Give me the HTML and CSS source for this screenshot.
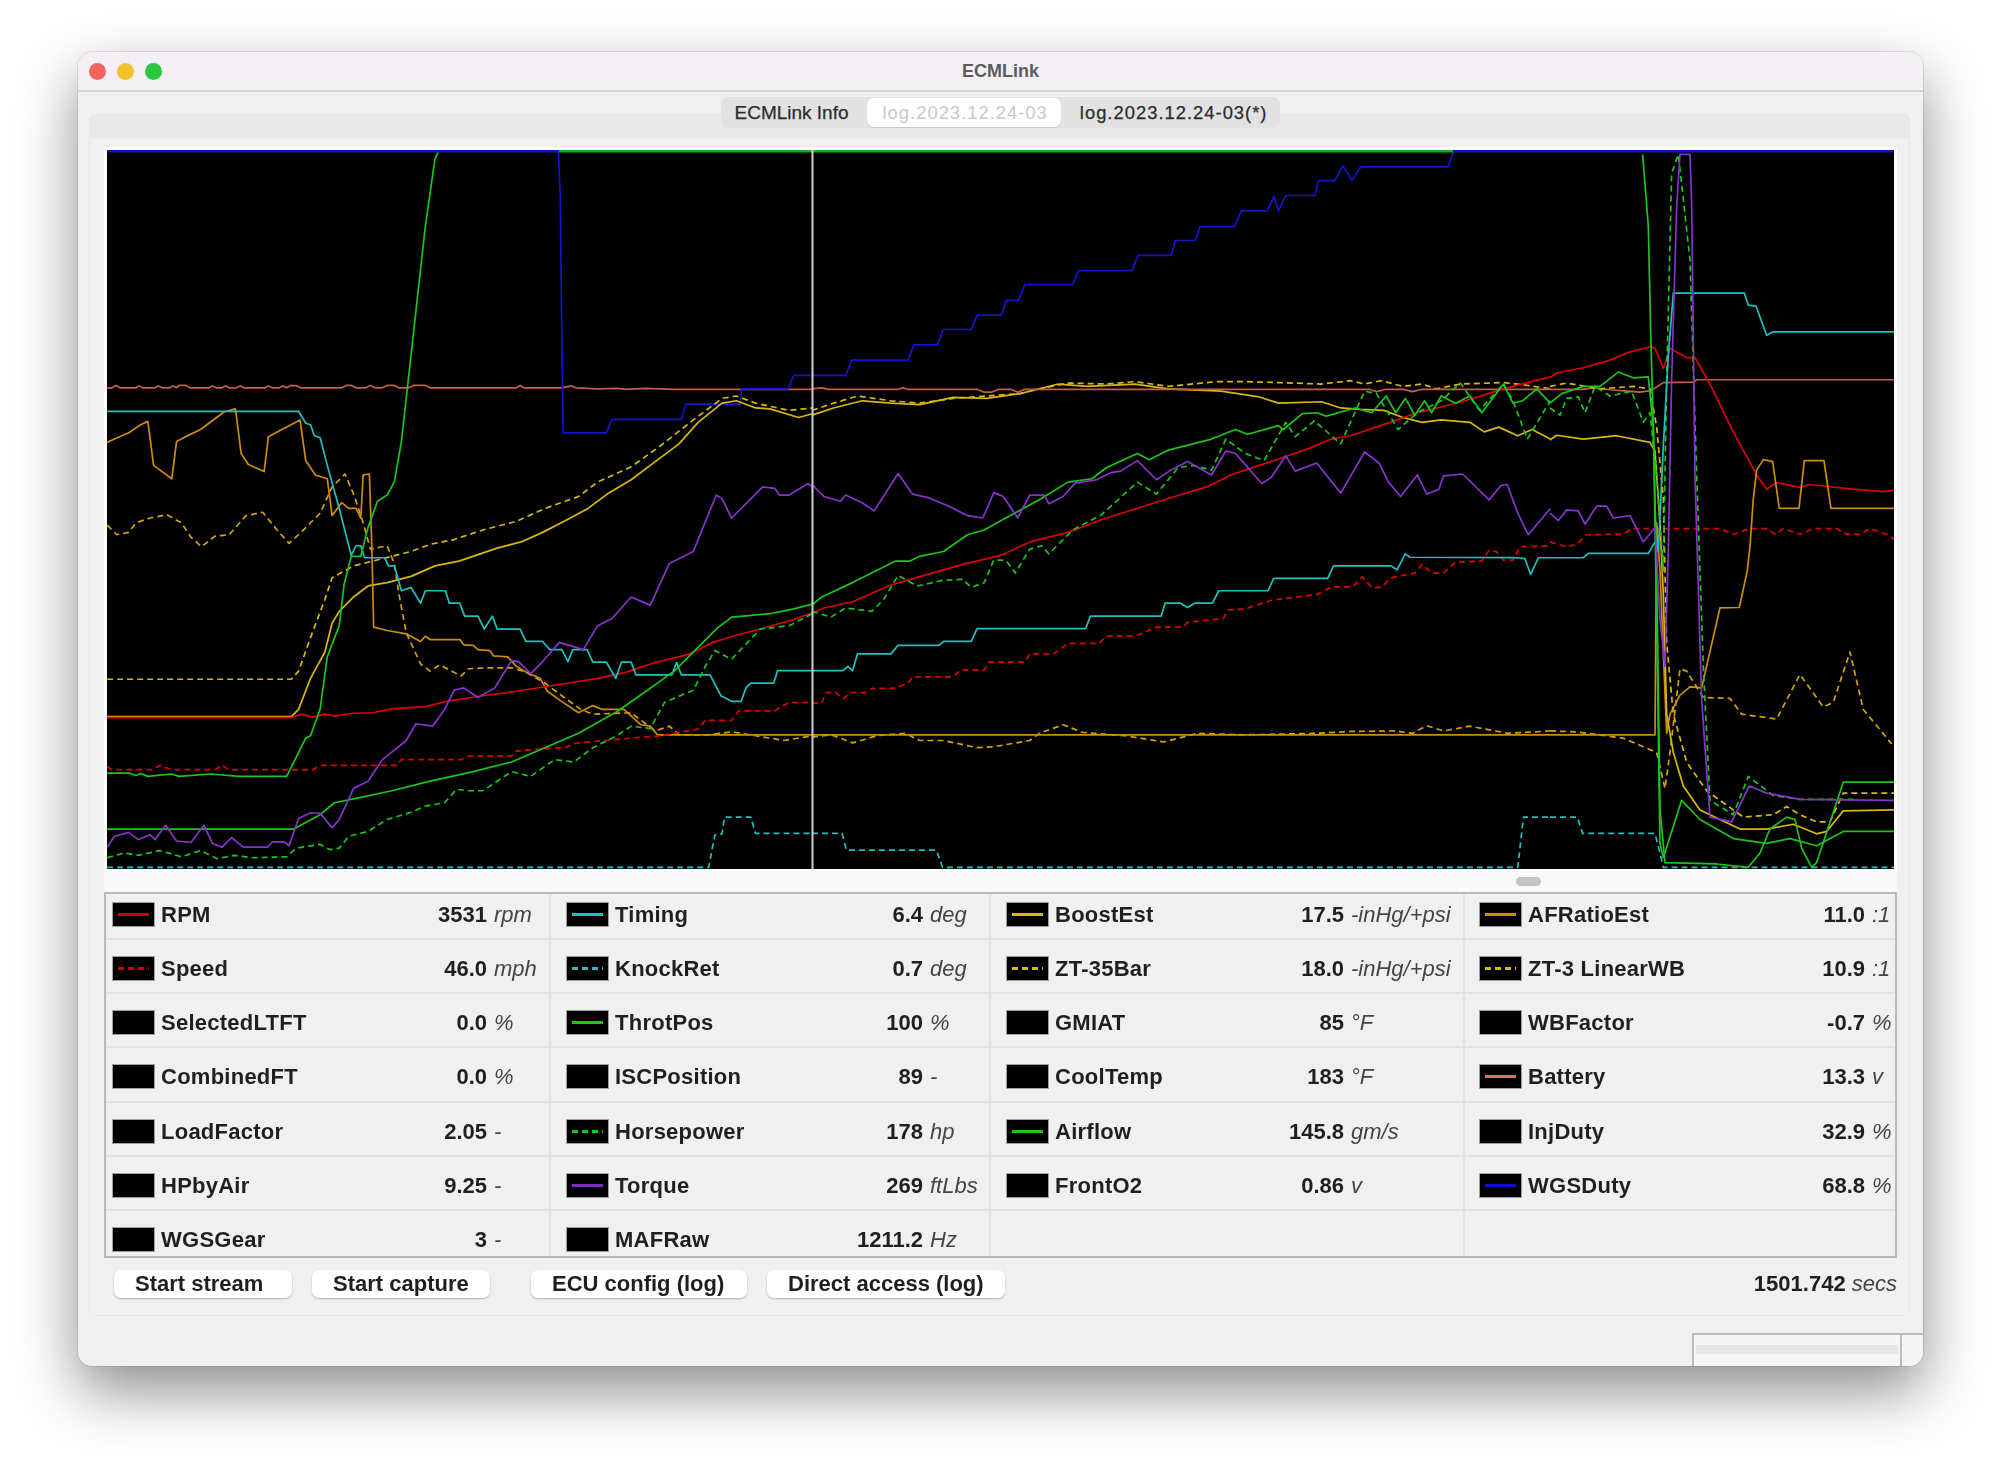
FILE: index.html
```html
<!DOCTYPE html>
<html lang="en">
  <head>
    <meta charset="UTF-8" />
    <title>ECMLink</title>
    <link rel="stylesheet" href="styles.css">
  </head>
  <body>
    <div class="window">
      <div class="titlebar">
        <div class="lights">
          <span class="light is-red"></span>
          <span class="light is-yellow"></span>
          <span class="light is-green"></span>
        </div>
        <div class="title">ECMLink</div>
      </div>

      <div class="tabs">
        <span class="tab is-info">ECMLink Info</span>
        <span class="tab is-active">log.2023.12.24-03</span>
        <span class="tab is-log">log.2023.12.24-03(*)</span>
      </div>

      <div class="pane">
        <div class="pane-body">
          <div class="chart-frame">
            <svg class="chart" viewBox="107 150 1787 719" preserveAspectRatio="none">
              <rect x="107" y="150" width="1787" height="719" fill="#000"/>

              <!-- left part, up to the cursor -->
              <g transform="translate(100 140) scale(.4785)">
                <polyline class="battery" points="15,518 25,518 33,513 42,518 75,518 82,514 90,518 115,518 122,514 130,518 145,518 152,514 160,518 165,513 180,513 188,518 228,518 235,514 243,518 255,518 262,514 270,518 285,518 293,514 300,518 345,518 352,514 360,518 375,518 382,514 390,518 398,513 412,514 420,518 505,518 515,513 525,513 535,518 555,518 565,513 575,518 590,518 600,513 615,513 625,518 645,518 655,513 680,513 690,518 870,518 878,513 886,518 965,518 985,514 995,518 1040,520 1080,519 1100,521 1140,519 1200,521 1489,521"/>
                <polyline class="wgs" points="958,25 962,120 964,320 968,612 1058,612 1070,584 1215,584 1224,552 1338,552 1341,520 1438,520 1450,492 1489,492"/>
                <polyline class="knock dashed" points="15,1520 1272,1520 1285,1452 1300,1450 1305,1415 1360,1415 1370,1449 1489,1449"/>
                <polyline class="zt35 dashed" points="15,1127 400,1127 415,1110 440,1040 470,960 485,915 530,890 590,875 650,860 690,845 740,835 800,815 870,797 930,770 1000,745 1040,715 1110,683 1170,640 1240,585 1300,540 1330,535 1370,550 1440,565 1489,560"/>
                <polyline class="boost" points="15,1205 400,1205 415,1190 440,1125 470,1070 485,1010 500,985 530,955 560,932 600,925 650,912 700,890 750,880 830,853 880,840 925,820 970,797 1020,770 1060,740 1110,710 1150,680 1210,635 1250,590 1300,550 1330,545 1370,560 1400,562 1460,580 1489,572"/>
                <polyline class="zt3 dashed" points="15,805 35,825 60,820 75,800 105,790 140,783 170,800 190,830 212,850 240,828 270,825 305,785 340,778 370,815 395,843 420,820 460,780 485,725 512,698 530,740 550,800 565,855 600,848 615,885 625,950 640,1030 670,1095 690,1110 710,1097 755,1120 770,1105 810,1103 860,1103 890,1112 930,1135 970,1165 1005,1190 1030,1200 1110,1197 1160,1235 1190,1225 1210,1243 1270,1243 1320,1237 1370,1245 1430,1255 1489,1245"/>
                <polyline class="afr" points="15,632 30,625 60,612 85,595 100,588 112,680 150,708 160,630 175,622 210,605 260,568 283,562 295,655 310,678 343,693 352,620 380,605 418,585 430,670 450,700 475,708 485,785 505,758 520,770 535,770 545,790 550,700 563,698 568,850 572,1018 600,1025 640,1032 670,1048 680,1037 690,1044 752,1044 760,1055 780,1056 790,1065 815,1067 822,1078 852,1080 870,1100 890,1112 920,1125 935,1152 960,1170 1000,1197 1030,1182 1050,1190 1095,1190 1130,1222 1150,1225 1165,1243 1489,1243"/>
                <polyline class="speed dashed" points="15,1310 25,1316 110,1316 125,1307 150,1316 240,1316 255,1307 270,1316 445,1316 460,1307 620,1307 630,1295 755,1295 770,1287 860,1287 870,1277 975,1269 990,1261 1130,1248 1165,1246 1250,1231 1265,1213 1320,1213 1335,1193 1410,1193 1425,1183 1440,1176 1489,1176"/>
                <polyline class="rpm" points="15,1207 400,1207 420,1200 445,1206 470,1200 490,1204 530,1198 570,1197 610,1189 680,1184 730,1172 790,1163 870,1152 960,1138 1040,1125 1100,1112 1160,1092 1230,1075 1280,1050 1330,1035 1380,1022 1450,1002 1489,988"/>
                <polyline class="timing" points="15,567 415,567 430,592 440,595 448,618 460,622 475,680 500,770 525,868 535,848 545,848 553,873 595,873 603,890 615,890 630,942 650,935 670,968 680,942 722,942 730,968 752,968 762,995 790,995 803,1022 820,995 830,1022 878,1022 890,1048 925,1048 940,1065 965,1065 978,1090 988,1065 1018,1065 1030,1091 1058,1091 1078,1125 1090,1091 1110,1091 1120,1118 1195,1118 1205,1092 1215,1118 1275,1118 1298,1162 1320,1173 1340,1173 1350,1145 1360,1135 1408,1135 1416,1109 1489,1109"/>
                <polyline class="airflow" points="15,1323 60,1323 75,1328 85,1324 100,1330 150,1325 165,1330 230,1325 290,1330 390,1330 410,1290 430,1250 440,1245 460,1190 475,1080 500,1015 510,930 525,870 545,870 560,810 580,755 600,742 615,715 630,630 650,450 680,180 700,40 707,25"/>
                <polyline class="throt" points="15,1440 405,1440 460,1410 490,1385 540,1375 610,1360 690,1340 780,1320 860,1300 1000,1240 1080,1195 1130,1160 1200,1110 1245,1065 1290,1020 1320,997 1400,990 1450,980 1489,970"/>
                <polyline class="hp dashed" points="15,1500 50,1490 80,1495 125,1485 170,1498 210,1485 245,1502 280,1495 320,1500 390,1498 410,1480 460,1472 480,1483 500,1480 520,1455 560,1445 600,1420 650,1405 680,1392 720,1385 745,1357 770,1360 800,1360 860,1320 900,1330 950,1295 990,1300 1030,1270 1080,1245 1110,1225 1150,1230 1180,1175 1240,1150 1265,1100 1285,1067 1320,1085 1380,1022 1440,1015 1489,990"/>
                <polyline class="torque" points="15,1478 30,1455 60,1447 80,1462 105,1452 115,1462 137,1432 160,1465 190,1468 217,1432 235,1470 255,1478 275,1458 300,1478 350,1478 360,1467 385,1467 395,1475 415,1418 440,1406 460,1407 485,1437 500,1420 530,1355 560,1340 590,1295 640,1255 660,1220 695,1225 720,1190 740,1150 760,1145 790,1165 825,1145 860,1088 875,1090 900,1115 925,1090 960,1050 1010,1065 1040,1015 1070,1000 1110,955 1150,972 1190,885 1240,860 1260,810 1288,742 1300,750 1320,790 1360,750 1385,725 1410,728 1420,742 1440,742 1480,718 1489,725"/>
              </g>

              <!-- middle part -->
              <g transform="translate(800 140) scale(.4785)">
                <polyline class="wgs" points="25,492 96,492 108,460 226,460 238,428 288,428 299,396 358,396 370,366 420,366 432,335 456,335 470,302 570,302 582,273 694,273 706,241 776,241 784,210 826,210 836,181 908,181 922,148 976,148 991,118 1000,148 1015,116 1076,116 1084,85 1118,85 1134,54 1154,84 1172,56 1355,56 1365,25"/>
                <polyline class="zt35 dashed" points="25,565 70,550 120,535 190,545 250,550 320,540 390,535 460,530 500,520 560,508 640,510 700,505 770,515 870,505 930,505 1000,507 1090,510 1150,503 1180,510 1215,503 1260,515 1300,510 1330,520 1380,510 1470,507 1500,510 1568,520"/>
                <polyline class="boost" points="25,575 70,560 130,545 190,550 250,553 320,538 390,540 460,530 540,510 600,515 700,510 770,520 880,525 960,537 1000,550 1090,547 1130,560 1170,563 1220,565 1260,580 1300,590 1340,585 1400,590 1430,610 1460,600 1500,618 1530,605 1568,625"/>
                <polyline class="battery" points="25,520 45,518 60,521 205,521 215,518 225,521 370,521 385,527 400,527 415,521 440,521 455,527 470,521 1170,521 1190,521 1205,526 1225,521 1260,521 1280,526 1300,521 1568,521"/>
                <polyline class="knock dashed" points="25,1449 88,1449 97,1484 285,1484 298,1520 1500,1520 1512,1415 1568,1415"/>
                <polyline class="zt3 dashed" points="25,1248 65,1243 110,1260 160,1245 220,1240 250,1255 300,1255 370,1270 405,1268 480,1255 500,1240 550,1222 590,1238 680,1245 760,1258 830,1240 930,1243 1080,1240 1150,1236 1245,1235 1280,1240 1310,1224 1345,1235 1400,1225 1480,1240 1568,1235"/>
                <polyline class="afr" points="25,1243 1568,1243"/>
                <polyline class="speed dashed" points="25,1177 45,1177 55,1155 75,1155 90,1168 105,1155 135,1155 150,1146 195,1146 225,1136 235,1122 320,1122 335,1108 385,1108 395,1091 470,1091 480,1074 530,1074 560,1052 625,1052 640,1037 700,1037 745,1018 800,1018 810,1008 885,1000 895,982 930,980 985,962 1080,950 1110,934 1155,934 1175,913 1195,935 1215,935 1235,915 1285,905 1300,887 1320,905 1345,905 1370,882 1425,880 1440,858 1455,860 1470,878 1490,878 1505,850 1568,848"/>
                <polyline class="timing" points="25,1109 90,1109 100,1100 110,1109 120,1074 190,1074 205,1056 290,1056 300,1048 358,1048 370,1021 597,1021 607,995 755,995 763,968 795,968 810,977 825,968 862,968 875,942 978,942 990,916 1103,916 1115,890 1235,890 1248,898 1265,865 1275,872 1500,873 1515,875 1527,908 1543,873 1568,873"/>
                <polyline class="rpm" points="25,990 50,978 110,965 190,930 260,910 340,887 420,868 480,840 560,820 640,790 720,765 790,743 850,725 900,700 960,680 1020,660 1060,646 1110,625 1150,618 1210,598 1290,570 1380,548 1470,520 1568,495"/>
                <polyline class="throt" points="25,972 45,955 110,925 200,880 230,880 250,870 300,860 350,825 385,815 430,790 500,752 560,715 610,708 640,685 705,655 730,668 770,648 860,625 910,605 935,615 1000,597 1010,605 1050,572 1080,570 1100,577 1160,560 1195,570 1225,535 1245,570 1265,540 1285,575 1305,545 1320,570 1340,535 1370,550 1400,535 1425,570 1470,510 1490,550 1510,545 1540,520 1568,550"/>
                <polyline class="hp dashed" points="25,985 65,997 95,978 150,985 175,960 205,910 245,932 300,920 340,918 358,935 385,925 405,878 430,878 450,905 480,855 505,848 520,865 570,815 630,783 650,765 705,715 745,740 790,685 820,680 860,690 890,625 930,655 970,670 1015,590 1035,620 1075,587 1130,635 1180,525 1205,530 1250,605 1290,570 1340,545 1380,508 1420,565 1470,510 1490,545 1520,625 1568,545"/>
                <polyline class="torque" points="25,720 50,745 85,755 95,742 130,758 155,775 205,697 235,740 270,748 310,765 350,785 382,790 405,737 425,745 455,790 480,742 510,742 520,760 550,745 575,717 620,710 650,695 670,692 705,670 745,710 770,693 810,672 860,700 890,650 910,655 965,718 985,705 1015,660 1035,692 1080,675 1130,738 1180,652 1210,675 1230,715 1255,745 1290,700 1310,740 1335,730 1345,702 1385,698 1440,752 1465,722 1478,720 1500,780 1522,825 1568,770"/>
              </g>

              <!-- right part, the shutdown spike -->
              <g transform="translate(1500 140) scale(.3333 .4785)">
                <polyline class="battery" points="150,521 250,521 280,518 330,522 380,525 420,527 450,524 470,516 490,507 580,506 590,501 1183,501"/>
                <polyline class="knock dashed" points="150,1415 232,1415 248,1449 465,1449 480,1490 490,1520 1183,1520"/>
                <polyline class="speed dashed" points="150,840 200,850 230,845 260,825 370,824 395,812 660,812 700,824 750,812 800,812 825,824 850,812 900,824 940,812 1010,812 1040,824 1080,824 1110,812 1160,824 1183,835"/>
                <polyline class="rpm" points="150,497 170,487 250,476 330,460 380,445 450,432 465,435 490,478 510,435 560,455 585,455 630,510 700,610 770,700 800,730 830,716 900,726 930,720 1050,729 1150,735 1183,732"/>
                <polyline class="zt3 dashed" points="150,1235 230,1237 370,1250 470,1280 495,1355 510,1280 540,1105 560,1110 610,1165 690,1167 725,1200 830,1210 900,1117 970,1185 1000,1175 1050,1070 1090,1190 1175,1262"/>
                <polyline class="afr" points="150,1243 465,1243 470,800 480,900 500,1240 510,1200 540,1160 570,1143 605,1145 660,978 718,977 742,900 750,850 760,750 770,690 790,668 818,672 838,770 897,770 913,670 972,670 993,770 1183,770"/>
                <polyline class="zt35 dashed" points="150,515 200,508 300,520 400,515 450,520 470,600 490,750 500,1050 520,1200 560,1300 620,1360 730,1415 820,1410 860,1393 900,1410 950,1425 990,1425 1030,1365 1183,1365"/>
                <polyline class="boost" points="150,627 170,617 250,625 350,618 450,632 465,650 480,800 490,950 500,1200 520,1280 550,1350 600,1400 720,1440 800,1440 880,1430 950,1450 980,1445 1030,1402 1183,1400"/>
                <polyline class="airflow" points="428,30 445,180 452,400 460,600 470,1000 480,1470 490,1500 545,1380 600,1420 700,1460 800,1470 870,1460 950,1475 1030,1445 1183,1445"/>
                <polyline class="throt" points="150,550 185,530 250,515 300,515 355,485 400,497 445,495 460,600 470,900 480,1400 495,1510 650,1513 745,1520 780,1490 810,1440 860,1415 885,1420 905,1480 935,1520 950,1510 1030,1342 1183,1342"/>
                <polyline class="hp dashed" points="150,560 180,575 200,540 235,537 255,570 285,515 330,535 395,525 430,590 450,570 470,700 490,900 500,500 515,70 535,30 570,250 590,700 610,1100 630,1380 700,1410 745,1330 820,1370 900,1378 1060,1378"/>
                <polyline class="timing" points="150,873 250,873 265,864 445,864 465,840 475,860 490,640 505,450 520,320 733,320 745,345 768,347 800,408 820,401 1183,401"/>
                <polyline class="torque" points="150,780 175,795 200,773 235,775 255,803 290,765 320,765 340,790 390,785 430,840 465,810 480,1000 495,1100 505,860 515,500 530,140 540,30 570,30 575,130 585,700 605,1170 630,1415 695,1425 748,1350 800,1365 900,1378 1183,1380"/>
              </g>

              <polyline class="top-line is-blue" points="107,151 559,151"/>
              <polyline class="top-line is-green" points="559,151 1453,151"/>
              <polyline class="top-line is-blue" points="1453,151 1894,151"/>
              <line class="cursor" x1="812.5" y1="150" x2="812.5" y2="869"/>
            </svg>
          </div>

          <div class="scroll-strip"><span class="scroll-thumb"></span></div>

          <div class="readings">
            <div class="cell col-a"><span class="swatch"><i class="trace red"></i></span><span class="reading"><span>RPM</span><span>3531</span></span><em>rpm</em></div>
            <div class="cell col-b"><span class="swatch"><i class="trace cyan"></i></span><span class="reading"><span>Timing</span><span>6.4</span></span><em>deg</em></div>
            <div class="cell col-c"><span class="swatch"><i class="trace yellow"></i></span><span class="reading"><span>BoostEst</span><span>17.5</span></span><em>-inHg/+psi</em></div>
            <div class="cell col-d"><span class="swatch"><i class="trace orange"></i></span><span class="reading"><span>AFRatioEst</span><span>11.0</span></span><em>:1</em></div>

            <div class="cell col-a"><span class="swatch"><i class="trace red is-dashed"></i></span><span class="reading"><span>Speed</span><span>46.0</span></span><em>mph</em></div>
            <div class="cell col-b"><span class="swatch"><i class="trace cyan is-dashed"></i></span><span class="reading"><span>KnockRet</span><span>0.7</span></span><em>deg</em></div>
            <div class="cell col-c"><span class="swatch"><i class="trace yellow is-dashed"></i></span><span class="reading"><span>ZT-35Bar</span><span>18.0</span></span><em>-inHg/+psi</em></div>
            <div class="cell col-d"><span class="swatch"><i class="trace yellow is-dashed"></i></span><span class="reading"><span>ZT-3 LinearWB</span><span>10.9</span></span><em>:1</em></div>

            <div class="cell col-a"><span class="swatch"></span><span class="reading"><span>SelectedLTFT</span><span>0.0</span></span><em>%</em></div>
            <div class="cell col-b"><span class="swatch"><i class="trace green"></i></span><span class="reading"><span>ThrotPos</span><span>100</span></span><em>%</em></div>
            <div class="cell col-c"><span class="swatch"></span><span class="reading"><span>GMIAT</span><span>85</span></span><em>°F</em></div>
            <div class="cell col-d"><span class="swatch"></span><span class="reading"><span>WBFactor</span><span>-0.7</span></span><em>%</em></div>

            <div class="cell col-a"><span class="swatch"></span><span class="reading"><span>CombinedFT</span><span>0.0</span></span><em>%</em></div>
            <div class="cell col-b"><span class="swatch"></span><span class="reading"><span>ISCPosition</span><span>89</span></span><em>-</em></div>
            <div class="cell col-c"><span class="swatch"></span><span class="reading"><span>CoolTemp</span><span>183</span></span><em>°F</em></div>
            <div class="cell col-d"><span class="swatch"><i class="trace salmon"></i></span><span class="reading"><span>Battery</span><span>13.3</span></span><em>v</em></div>

            <div class="cell col-a"><span class="swatch"></span><span class="reading"><span>LoadFactor</span><span>2.05</span></span><em>-</em></div>
            <div class="cell col-b"><span class="swatch"><i class="trace green is-dashed"></i></span><span class="reading"><span>Horsepower</span><span>178</span></span><em>hp</em></div>
            <div class="cell col-c"><span class="swatch"><i class="trace green"></i></span><span class="reading"><span>Airflow</span><span>145.8</span></span><em>gm/s</em></div>
            <div class="cell col-d"><span class="swatch"></span><span class="reading"><span>InjDuty</span><span>32.9</span></span><em>%</em></div>

            <div class="cell col-a"><span class="swatch"></span><span class="reading"><span>HPbyAir</span><span>9.25</span></span><em>-</em></div>
            <div class="cell col-b"><span class="swatch"><i class="trace purple"></i></span><span class="reading"><span>Torque</span><span>269</span></span><em>ftLbs</em></div>
            <div class="cell col-c"><span class="swatch"></span><span class="reading"><span>FrontO2</span><span>0.86</span></span><em>v</em></div>
            <div class="cell col-d"><span class="swatch"><i class="trace blue"></i></span><span class="reading"><span>WGSDuty</span><span>68.8</span></span><em>%</em></div>

            <div class="cell col-a"><span class="swatch"></span><span class="reading"><span>WGSGear</span><span>3</span></span><em>-</em></div>
            <div class="cell col-b"><span class="swatch"></span><span class="reading"><span>MAFRaw</span><span>1211.2</span></span><em>Hz</em></div>
            <div class="cell col-c"></div>
            <div class="cell col-d"></div>
          </div>

          <div class="footer">
            <button class="btn is-stream">Start stream</button>
            <button class="btn is-stream">Start capture</button>
            <button class="btn is-config">ECU config (log)</button>
            <button class="btn is-direct">Direct access (log)</button>
            <div class="elapsed"><b>1501.742</b> <em>secs</em></div>
          </div>
        </div>
      </div>

      <div class="status">
        <div class="status-box"><span class="status-band"></span></div>
        <div class="status-corner"></div>
      </div>
    </div>
  </body>
</html>
```

FILE: styles.css
```css
* {
  box-sizing: border-box;
  margin: 0;
  padding: 0;
}
body {
  background: #fff;
  font-family: "Liberation Sans", Arial, sans-serif;
  color: #1f1f1f;
  padding: 52px 0 0 78px;
  height: 1469px;
  overflow: hidden;
}
.window {
  width: 1845px;
  height: 1314px;
  background: #f0f0f0;
  border-radius: 14px;
  box-shadow: 0 25px 60px 0 rgba(0, 0, 0, 0.45), 0 0 0 1px rgba(0, 0, 0, 0.1);
  display: flex;
  flex-direction: column;
  overflow: hidden;
  filter: blur(0.45px);
}

.titlebar {
  height: 40px;
  flex: none;
  padding-top: 1px;
  background: #f3eff4;
  border-bottom: 2px solid #d6d4d7;
  display: grid;
  grid-template-columns: 1fr auto 1fr;
  align-items: center;
}
.lights {
  display: flex;
  gap: 11px;
  padding-left: 11px;
}
.light {
  width: 17px;
  height: 17px;
  border-radius: 50%;
}
.is-red { background: #f4645c; }
.is-yellow { background: #f2c12e; }
.is-green { background: #2bc63f; }
.title {
  font-size: 18px;
  font-weight: bold;
  color: #5c5c5c;
}

.tabs {
  position: relative;
  z-index: 1;
  align-self: center;
  display: flex;
  height: 31px;
  margin: 5px 0 -14px;
  background: #e2e2e2;
  border-radius: 7px;
}
.tab {
  font-size: 18.4px;
  line-height: 31px;
  color: #2b2b2b;
  -webkit-text-stroke: 0.25px #2b2b2b;
}
.tab.is-info {
  padding: 0 18px 0 13px;
  font-size: 19px;
}
.tab.is-log {
  padding: 0 12px 0 19px;
  letter-spacing: 1px;
}
.tab.is-active {
  padding: 0 13px 0 16px;
  margin: 1px 0;
  line-height: 29px;
  letter-spacing: 1px;
  background: #fff;
  color: #c9c9c9;
  -webkit-text-stroke: 0;
  border-radius: 7px;
  box-shadow: 0 1px 1px rgba(0, 0, 0, 0.12);
}

.pane {
  margin: 0 13px 0 11px;
  height: 1202px;
  flex: none;
  padding-top: 23px;
  background: #e9e9e9;
  border: 1px solid #e6e6e6;
  border-radius: 6px;
}
.pane-body {
  height: 100%;
  background: #f0f0f0;
  padding: 9px 12px 0 14px;
}

.chart-frame {
  background: #fff;
  padding: 3px 3px 2px;
}
.chart {
  display: block;
  width: 1787px;
  height: 719px;
}
.chart polyline {
  fill: none;
  stroke-width: 1.7px;
  stroke-linejoin: round;
  vector-effect: non-scaling-stroke;
}
.chart .dashed { stroke-dasharray: 6 4; }
.chart .rpm, .chart .speed { stroke: #dc0008; }
.chart .timing, .chart .knock { stroke: #1fc0c0; }
.chart .boost, .chart .zt35 { stroke: #d8b80c; }
.chart .afr { stroke: #cc8c0c; }
.chart .zt3 { stroke: #d4a00c; }
.chart .battery { stroke: #c85c50; }
.chart .throt, .chart .airflow, .chart .hp { stroke: #1cc41c; }
.chart .torque { stroke: #8534cc; }
.chart .wgs { stroke: #1414cc; }
.chart .top-line { stroke-width: 3px; }
.chart .is-blue { stroke: #1010c0; }
.chart .is-green { stroke: #10b010; }
.cursor {
  stroke: #d0d0d0;
  stroke-width: 2px;
}

.scroll-strip {
  height: 21px;
  background: #f9f9f9;
  display: flex;
  justify-content: flex-end;
  align-items: center;
  padding-right: 356px;
}
.scroll-thumb {
  width: 25px;
  height: 9px;
  border-radius: 5px;
  background: #c4c4c4;
}

.readings {
  display: grid;
  grid-template-columns: 445px 440px 474px 432px;
  grid-template-rows: 46px repeat(5, 54.2px) 1fr;
  height: 366px;
  border: 2px solid #b9b9b9;
  background: #f0f0f0;
  overflow: hidden;
}
.cell {
  display: flex;
  align-items: flex-start;
  padding: 16px 0 0 15px;
  font-size: 22px;
  line-height: 25px;
  border-right: 2px solid #e2e2e2;
  border-bottom: 2px solid #e2e2e2;
}
.cell.col-a { padding-left: 6px; }
.cell.col-d {
  padding-left: 14px;
  border-right: none;
}
.cell:nth-child(-n+4) { padding-top: 8px; }
.cell:nth-last-child(-n+4) { border-bottom: none; }
.swatch {
  flex: none;
  width: 43px;
  height: 25px;
  margin-right: 6px;
  background: #000;
  border: 1px solid #a0a0a0;
  display: flex;
  align-items: center;
  padding: 0 5px;
}
.trace {
  display: block;
  width: 100%;
  height: 3px;
}
.trace.red { background: #d0000a; color: #d0000a; }
.trace.cyan { background: #1fc0c0; color: #1fc0c0; }
.trace.yellow { background: #d8b80c; color: #d8b80c; }
.trace.orange { background: #cc8c0c; color: #cc8c0c; }
.trace.green { background: #1cc41c; color: #1cc41c; }
.trace.salmon { background: #e07060; color: #e07060; }
.trace.purple { background: #7a2ec4; color: #7a2ec4; }
.trace.blue { background: #1010c8; color: #1010c8; }
.trace.is-dashed {
  background: repeating-linear-gradient(to right, currentColor 0 6px, transparent 6px 10px);
}
.reading {
  flex: none;
  display: flex;
  justify-content: space-between;
  font-weight: bold;
}
.reading span:first-child { letter-spacing: 0.25px; }
.col-a .reading { width: 326px; }
.col-b .reading { width: 308px; }
.col-c .reading { width: 289px; }
.col-d .reading { width: 337px; }
.cell em {
  margin-left: 7px;
  color: #444;
  white-space: nowrap;
}

.footer {
  display: flex;
  align-items: center;
  padding: 12px 0 0 10px;
}
.btn {
  height: 28px;
  padding: 0 21px;
  margin-right: 20px;
  background: #fff;
  border: none;
  border-radius: 7px;
  box-shadow: 0 1px 2px rgba(0, 0, 0, 0.25);
  font: bold 22px "Liberation Sans", Arial, sans-serif;
  color: #1f1f1f;
  text-align: left;
}
.btn.is-stream { width: 178px; }
.btn.is-config {
  width: 216px;
  margin-left: 21px;
}
.btn.is-direct { width: 238px; }
.elapsed {
  margin-left: auto;
  font-size: 22px;
}
.elapsed em { color: #444; }

.status {
  margin-top: auto;
  display: flex;
  justify-content: flex-end;
  height: 33px;
}
.status-box {
  width: 208px;
  background: #f5f5f5;
  border-top: 2px solid #bcbcbc;
  border-left: 2px solid #bcbcbc;
  padding: 10px 2px 0;
}
.status-band {
  display: block;
  height: 9px;
  background: #e6e6e6;
}
.status-corner {
  width: 23px;
  background: #f5f5f5;
  border-top: 2px solid #bcbcbc;
  border-left: 2px solid #bcbcbc;
}
```
